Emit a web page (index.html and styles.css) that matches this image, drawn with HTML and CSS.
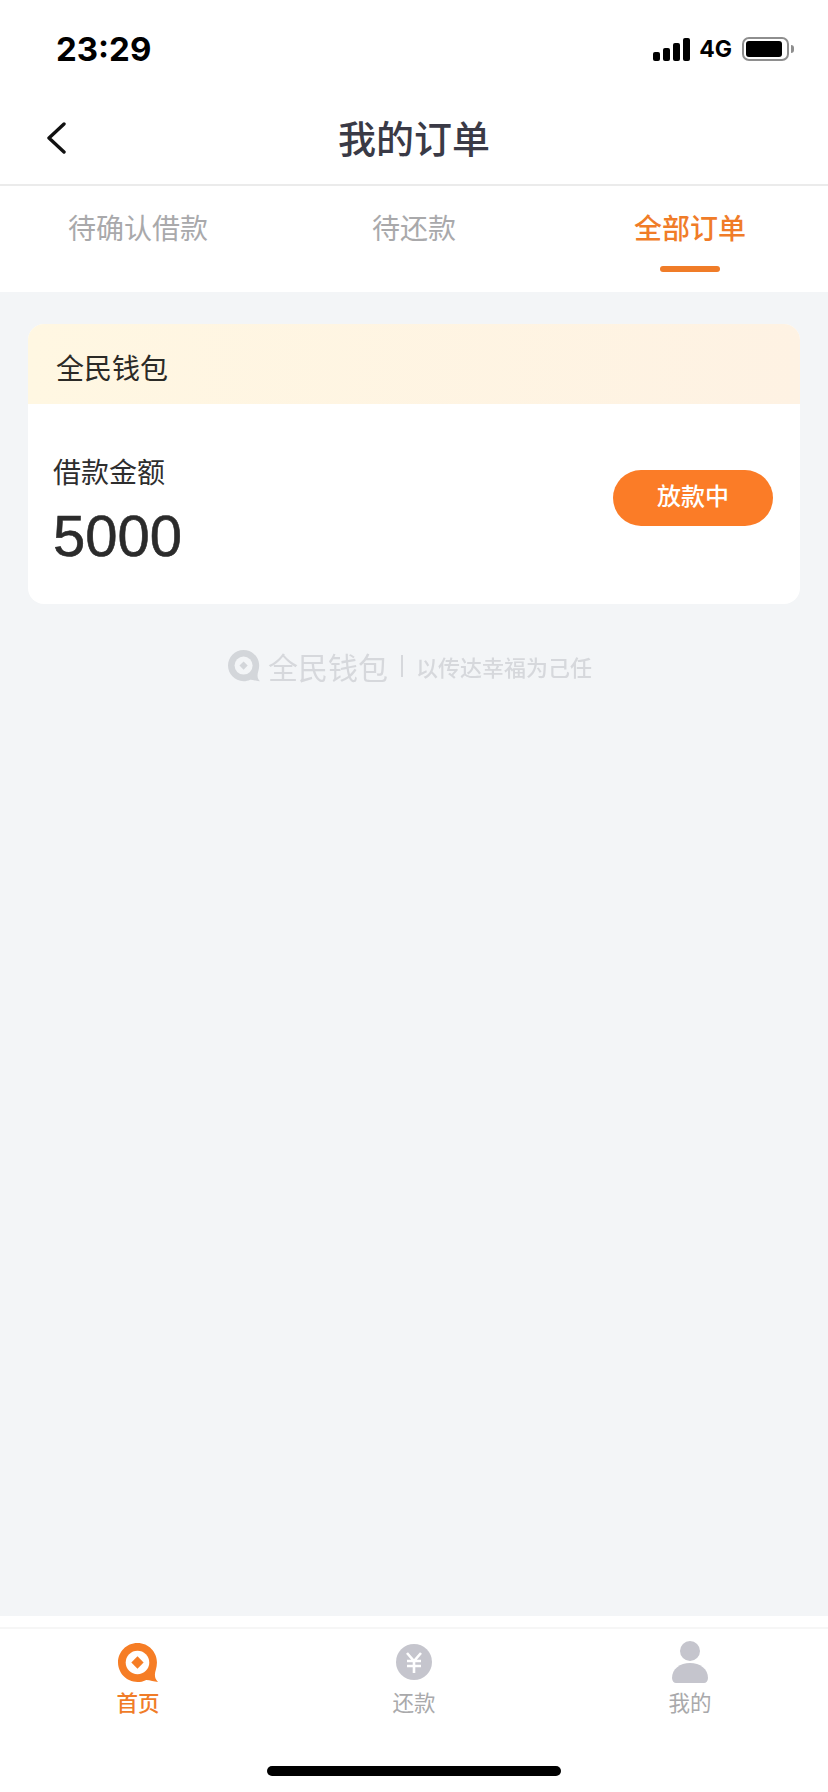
FILE: index.html
```html
<!DOCTYPE html>
<html lang="zh-CN">
<head>
  <meta charset="UTF-8" />
  <title>我的订单</title>
  <meta name="viewport" content="width=device-width, initial-scale=1.0" />
  <link rel="stylesheet" href="styles.css">
</head>
<body>
  <div class="status-bar">
    <span class="time">23:29</span>
    <div class="status-right">
      <div class="signal"><i></i><i></i><i></i><i></i></div>
      <span class="network">4G</span>
      <div class="battery"><div class="battery-fill"></div></div>
      <div class="battery-cap"></div>
    </div>
  </div>

  <header class="nav">
    <svg class="back" width="20" height="32" viewBox="0 0 20 32">
      <path d="M18 2 L3 16 L18 30" fill="none" stroke="#111" stroke-width="3.4" stroke-linecap="round" stroke-linejoin="round"/>
    </svg>
    <h1>我的订单</h1>
  </header>

  <nav class="tabs">
    <div class="tab">待确认借款</div>
    <div class="tab">待还款</div>
    <div class="tab active">全部订单</div>
  </nav>

  <main class="content">
    <div class="card">
      <div class="card-head">全民钱包</div>
      <div class="card-body">
        <div>
          <div class="amount-label">借款金额</div>
          <div class="amount">5000</div>
        </div>
        <div class="state">放款中</div>
      </div>
    </div>

    <div class="slogan">
      <svg width="32" height="32" viewBox="0 0 39 39">
        <path d="M19 0 C30 0 38 9 38 19 C38 24 36 28 36 31 C36 34 37 36 39 38 C35 38 31 36 27 36.2 C24.5 37.4 22 38 19 38 C8 38 0 29 0 19 C0 9 8 0 19 0 Z" fill="#d3d6da"/>
        <circle cx="19" cy="19" r="11" fill="#f3f5f7"/>
        <path d="M19 14 L24 19 L19 24 L14 19 Z" fill="#d3d6da"/>
      </svg>
      <span class="slogan-name">全民钱包</span>
      <span class="slogan-sep"></span>
      <span class="slogan-text">以传达幸福为己任</span>
    </div>
  </main>

  <footer class="tabbar">
    <div class="tabbar-items">
      <div class="tabbar-item active">
        <svg width="40" height="42" viewBox="0 0 39 41">
          <path d="M19 2 C30 2 38 11 38 21 C38 26 36 30 36 33 C36 36 37 38 39 40 C35 40 31 38 27 38.2 C24.5 39.4 22 40 19 40 C8 40 0 31 0 21 C0 11 8 2 19 2 Z" fill="#f67d25"/>
          <circle cx="19" cy="21" r="11.5" fill="#fff"/>
          <path d="M19 15 L25 21 L19 27 L13 21 Z" fill="#f67d25"/>
        </svg>
        <span>首页</span>
      </div>
      <div class="tabbar-item">
        <svg width="40" height="42" viewBox="0 0 40 42">
          <circle cx="20" cy="21" r="18" fill="#c5c5cd"/>
          <path d="M13 12 L20 20 L27 12 M13 20 H27 M13 25 H27 M20 20 V32" fill="none" stroke="#fff" stroke-width="2.6"/>
        </svg>
        <span>还款</span>
      </div>
      <div class="tabbar-item">
        <svg width="40" height="42" viewBox="0 0 40 42">
          <circle cx="20" cy="10" r="10" fill="#c5c5cd"/>
          <path d="M2 37 C2 28 10 22 20 22 C30 22 38 28 38 37 C38 40 36 42 34 42 H6 C4 42 2 40 2 37 Z" fill="#c5c5cd"/>
        </svg>
        <span>我的</span>
      </div>
    </div>
    <div class="home-bar"></div>
  </footer>
</body>
</html>
```

FILE: styles.css
```css
* { box-sizing: border-box; }
body {
  margin: 0;
  width: 828px;
  height: 1792px;
  display: flex;
  flex-direction: column;
  background: #f3f5f7;
  font-family: "Liberation Sans", "Noto Sans CJK SC", sans-serif;
  overflow: hidden;
}

.status-bar {
  height: 92px;
  background: #fff;
  display: flex;
  justify-content: space-between;
  align-items: flex-start;
  padding: 30px 34px 0 56px;
}
.time {
  font-family: Inter, sans-serif;
  font-weight: 700;
  font-size: 33px;
  line-height: 38px;
  color: #000;
}
.status-right {
  display: flex;
  align-items: center;
  height: 38px;
}
.signal {
  display: flex;
  align-items: flex-end;
  gap: 3px;
  height: 23px;
  margin-right: 9px;
}
.signal i {
  display: block;
  width: 7px;
  border-radius: 2px;
  background: #000;
}
.signal i:nth-child(1) { height: 9px; }
.signal i:nth-child(2) { height: 13px; }
.signal i:nth-child(3) { height: 18px; }
.signal i:nth-child(4) { height: 23px; }
.network {
  font-family: Inter, sans-serif;
  font-weight: 700;
  font-size: 23px;
  line-height: 24px;
  color: #000;
  margin-right: 10px;
}
.battery {
  width: 47px;
  height: 24px;
  border: 2px solid #8e8e8e;
  border-radius: 7px;
  padding: 2px;
}
.battery-fill {
  width: 36px;
  height: 16px;
  background: #000;
  border-radius: 3px;
}
.battery-cap {
  width: 3px;
  height: 8px;
  margin-left: 2px;
  background: #8e8e8e;
  border-radius: 0 3px 3px 0;
}

.nav {
  height: 94px;
  background: #fff;
  border-bottom: 2px solid #ebebeb;
  display: grid;
  grid-template-columns: 96px 1fr 96px;
  align-items: center;
}
.back { margin-left: 46px; }
.nav h1 {
  margin: 0;
  text-align: center;
  font-size: 38px;
  font-weight: 500;
  line-height: 50px;
  color: #3a3a46;
  padding-top: 4px;
}

.tabs {
  height: 106px;
  background: #fff;
  display: grid;
  grid-template-columns: repeat(3, 1fr);
}
.tab {
  position: relative;
  text-align: center;
  padding-top: 25px;
  font-size: 28px;
  line-height: 38px;
  color: #a9a9ab;
}
.tab.active {
  color: #f07c28;
  font-weight: 500;
}
.tab.active::after {
  content: "";
  position: absolute;
  left: 50%;
  top: 80px;
  width: 60px;
  height: 6px;
  margin-left: -30px;
  border-radius: 3px;
  background: #f07c28;
}

.content {
  flex: 1;
  padding: 32px 28px 0;
}
.card {
  background: #fff;
  border-radius: 16px;
  overflow: hidden;
}
.card-head {
  height: 80px;
  padding-left: 28px;
  background: linear-gradient(90deg, #fff7e2, #fef2e3);
  font-size: 28px;
  line-height: 92px;
  color: #2b2a26;
}
.card-body {
  height: 200px;
  display: flex;
  justify-content: space-between;
  align-items: center;
  padding: 0 27px 0 25px;
}
.amount-label {
  margin-top: 12px;
  font-size: 28px;
  line-height: 40px;
  color: #2e2e2e;
}
.amount {
  margin-top: 11px;
  font-size: 58px;
  line-height: 62px;
  color: #2b2b2b;
  -webkit-text-stroke: 0.6px #2b2b2b;
}
.state {
  width: 160px;
  height: 56px;
  margin-top: -12px;
  border-radius: 28px;
  background: #fb7c27;
  color: #fff;
  text-align: center;
  font-size: 24px;
  font-weight: 500;
  line-height: 54px;
}

.slogan {
  display: flex;
  align-items: center;
  justify-content: center;
  margin-top: 46px;
  padding-right: 8px;
  height: 32px;
  filter: blur(0.7px);
}
.slogan-name {
  margin-left: 8px;
  font-size: 30px;
  font-weight: 400;
  color: #d6d8dc;
}
.slogan-sep {
  width: 2px;
  height: 22px;
  margin: 0 13px;
  background: #d6d8dc;
}
.slogan-text {
  font-size: 22px;
  font-weight: 500;
  color: #d6d8dc;
}

.tabbar {
  height: 176px;
  background: #fff;
  padding-top: 11px;
}
.tabbar-items {
  border-top: 2px solid #f6f6f6;
  display: grid;
  grid-template-columns: repeat(3, 1fr);
  padding-top: 12px;
  height: 139px;
}
.tabbar-item {
  display: flex;
  flex-direction: column;
  align-items: center;
  font-size: 21.5px;
  line-height: 30px;
  color: #a9a9ab;
}
.tabbar-item svg { margin-bottom: 6px; }
.tabbar-item.active {
  color: #f07c28;
  font-weight: 500;
}
.home-bar {
  width: 294px;
  height: 10px;
  margin: 0 auto;
  border-radius: 5px;
  background: #000;
}
```
